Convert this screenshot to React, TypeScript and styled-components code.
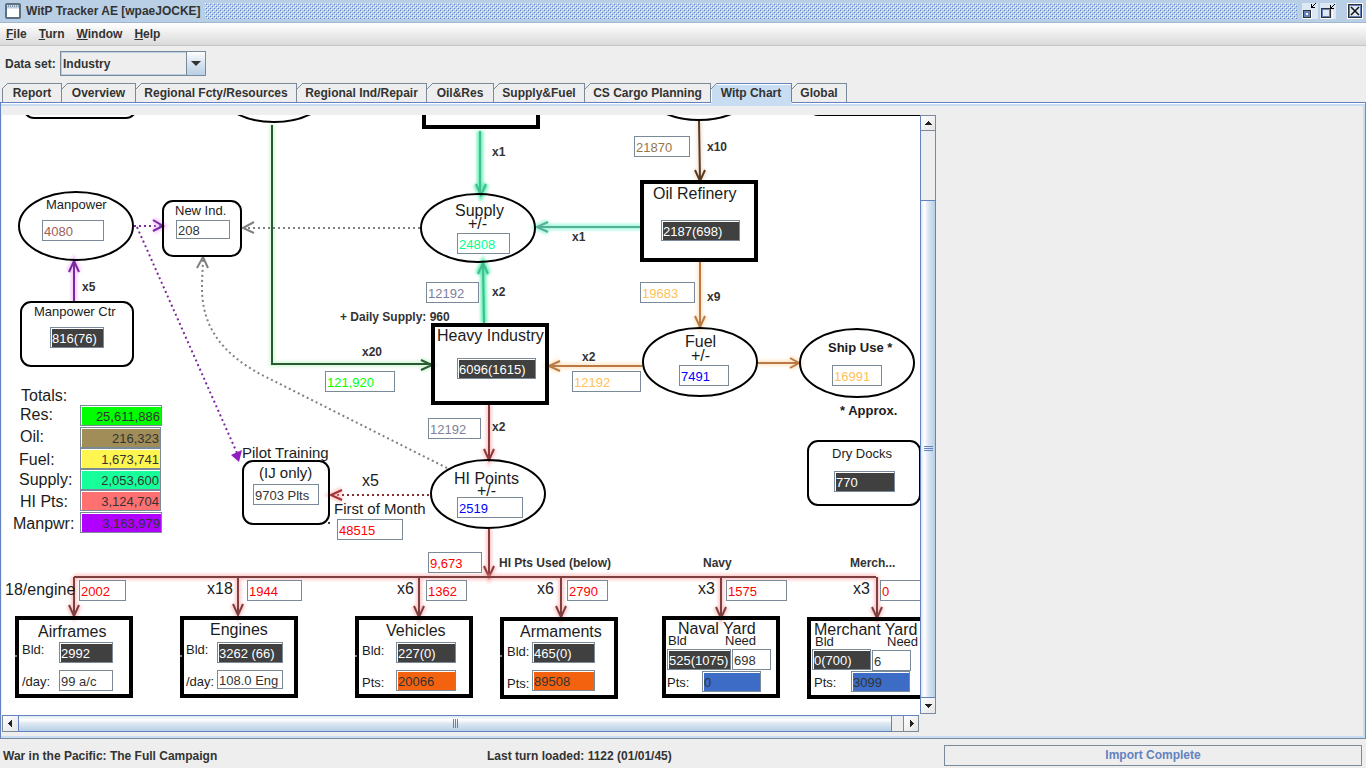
import React from "react";
import styled, { createGlobalStyle, css } from "styled-components";

const GlobalStyle = createGlobalStyle`
  *, *::before, *::after { box-sizing: border-box; }
  body {
    margin: 0;
    background: #eeeeee;
    color: #333333;
    font: bold 12px/14px "Liberation Sans", Arial, sans-serif;
  }
  button, input, select { font: inherit; color: inherit; margin: 0; }
`;

const Window = styled.div`
  display: flex;
  flex-direction: column;
  min-height: 100vh;
`;

/* ---------- title bar ---------- */

const TitleBar = styled.header`
  display: flex;
  align-items: center;
  height: 23px;
  padding: 0 3px 0 5px;
  background: #b8cfe5;
  border-bottom: 1px solid #9fb6cd;
`;

const WindowTitle = styled.h1`
  flex: 0 0 179px;
  margin: 0 0 0 5px;
  font-size: 12px;
  line-height: 14px;
  white-space: nowrap;
`;

const Bumps = styled.svg`
  flex: 1;
  min-width: 0;
  height: 16px;
  margin-right: 5px;
`;

const TitleButton = styled.button<{ $apart?: boolean }>`
  width: 16px;
  height: 16px;
  padding: 0;
  border: 0;
  background: none;
  margin-left: ${(p) => (p.$apart ? 9 : 0)}px;
  margin-right: ${(p) => (p.$apart ? 0 : 2)}px;
  svg { display: block; }
`;

/* ---------- menu and data set ---------- */

const MenuBar = styled.nav`
  display: flex;
  gap: 12px;
  align-items: center;
  height: 23px;
  padding: 0 6px;
  background: linear-gradient(#ffffff, #dadada);
  border-bottom: 1px solid #c4c4c4;
`;

const MenuButton = styled.button`
  padding: 0;
  border: 0;
  background: none;
  font-weight: bold;
  &::first-letter { text-decoration: underline; }
`;

const DataSetRow = styled.div`
  display: flex;
  align-items: center;
  padding: 5px;
`;

const DataSetLabel = styled.label`
  width: 55px;
`;

const Combo = styled.div`
  display: grid;
  grid-template-columns: 125px 19px;
  border: 1px solid #7a8a99;
  height: 25px;
  width: 146px;
`;

const ComboSelect = styled.select`
  grid-area: 1 / 1 / 2 / 3;
  appearance: none;
  width: 100%;
  height: 100%;
  padding: 0 20px 0 1px;
  border: 1px solid #b8cfe5;
  border-radius: 0;
  background: #eeeeee;
  font-weight: bold;
`;

const ComboArrow = styled.span`
  grid-area: 1 / 2 / 2 / 3;
  display: grid;
  place-items: center;
  pointer-events: none;
  border-left: 1px solid #7a8a99;
  background: linear-gradient(#ffffff, #dde8f3 40%, #b8cfe5);
  z-index: 1;
`;

/* ---------- tabs ---------- */

const TabList = styled.div`
  display: flex;
  padding: 2px 2px 0;
`;

const Tab = styled.button<{ $selected: boolean; $width: number }>`
  position: relative;
  flex: 0 0 ${(p) => p.$width}px;
  height: 19px;
  padding: 0 0 1px;
  border: 0 solid #7a8a99;
  border-width: 1px 1px 0 0;
  background: #eeeeee;
  font-weight: bold;
  text-align: center;
  white-space: nowrap;
  &:first-child { border-left-width: 1px; }
  &::before {
    content: "";
    position: absolute;
    left: 0;
    top: -1px;
    width: 6px;
    height: 6px;
    background: linear-gradient(135deg, #eeeeee 44%, #7a8a99 44% 56%, transparent 56%);
  }
  &:first-child::before { left: -1px; }
  ${(p) =>
    p.$selected &&
    css`
      border-color: #6382bf;
      background: #c8ddf2;
      box-shadow: inset 1px 1px 0 #ffffff, 0 3px 0 #c8ddf2;
      z-index: 1;
    `}
`;

const TabPanel = styled.main`
  flex: 1;
  display: grid;
  grid-template-columns: minmax(0, 918px) 17px;
  grid-template-rows: minmax(600px, 1fr) 17px;
  padding: 12px 0 6px 1px;
  border: 1px solid #6382bf;
  border-right-color: #7a8a99;
  border-bottom-color: #7a8a99;
  box-shadow: inset 0 1px 0 #ffffff, inset 0 3px 0 #c8ddf2,
    inset -2px -2px 0 #c8ddf2;
`;

/* ---------- chart viewport and scroll bars ---------- */

const Viewport = styled.div`
  overflow: hidden;
  background: #ffffff;
`;

/* The chart is shown scrolled; the margins are the scroll position. */
const Chart = styled.div`
  position: relative;
  width: 940px;
  height: 715px;
  margin: -115px 0 0 -2px;
`;

const ChartDrawing = styled.svg`
  display: block;
`;

const ScrollBar = styled.div<{ $vertical?: boolean }>`
  display: flex;
  flex-direction: ${(p) => (p.$vertical ? "column" : "row")};
  background: #eeeeee;
  border: 1px solid #7a8a99;
  ${(p) =>
    p.$vertical
      ? "width: 16px; margin-bottom: 1px; border-left-color: #6382bf;"
      : "height: 17px; margin-right: 1px; border-top-color: #6382bf;"}
`;

const ScrollButton = styled.button<{ $vertical?: boolean; $end?: boolean }>`
  display: grid;
  place-items: center;
  flex: none;
  padding: 0;
  width: ${(p) => (p.$vertical ? "auto" : "15px")};
  height: ${(p) => (p.$vertical ? "15px" : "auto")};
  border: 0 solid #7a8a99;
  ${(p) =>
    p.$vertical
      ? p.$end
        ? ""
        : "border-bottom-width: 1px;"
      : p.$end
        ? "border-left-width: 1px;"
        : ""}
  background: linear-gradient(135deg, #ffffff, #e4e4e4);
`;

const Track = styled.div<{ $size: number }>`
  flex: ${(p) => p.$size} 1 0;
`;

const Thumb = styled.div<{ $size: number; $vertical?: boolean }>`
  display: grid;
  place-items: center;
  flex: ${(p) => p.$size} 1 0;
  border: 1px solid #6382bf;
  margin: ${(p) => (p.$vertical ? "0 -1px" : "-1px 0")};
  background: linear-gradient(
    ${(p) => (p.$vertical ? "90deg" : "180deg")},
    #dde8f3, #ffffff 25%, #dde8f3 50%, #b8cfe5
  );
`;

/* ---------- status bar ---------- */

const StatusBar = styled.footer`
  display: grid;
  grid-template-columns: 484fr 457fr 418fr;
  align-items: center;
  height: 29px;
  padding: 4px 4px 0 3px;
`;

const Progress = styled.div`
  height: 21px;
  border: 1px solid #7a8a99;
  line-height: 19px;
  text-align: center;
  color: #6382bf;
`;

/* ---------- chart pieces ---------- */

type FontSize = 12 | 13 | 15 | 16;

const ascent: Record<FontSize, number> = { 12: 11, 13: 12, 15: 14, 16: 14 };

const ChartLabel = styled.span<{ $x: number; $y: number; $size: FontSize; $bold?: boolean }>`
  position: absolute;
  left: ${(p) => p.$x}px;
  top: ${(p) => p.$y - ascent[p.$size]}px;
  font-size: ${(p) => p.$size}px;
  line-height: ${(p) => p.$size + 2}px;
  font-weight: ${(p) => (p.$bold ? "bold" : "normal")};
  color: ${(p) => (p.$bold && p.$size === 12 ? "#333333" : "#1c1c1c")};
  white-space: pre;
`;

const ChartField = styled.input<{
  $x: number;
  $y: number;
  $w: number;
  $h: number;
  $ink: string;
  $fill: string;
  $right: boolean;
}>`
  position: absolute;
  left: ${(p) => p.$x}px;
  top: ${(p) => p.$y}px;
  width: ${(p) => p.$w}px;
  height: ${(p) => p.$h}px;
  padding: 2px 1px 0 1px;
  border: 1px solid #7a8a99;
  border-radius: 0;
  background: ${(p) => p.$fill};
  box-shadow: inset 1px 1px 0 #ffffff;
  color: ${(p) => p.$ink};
  font-weight: normal;
  font-size: 13px;
  text-align: ${(p) => (p.$right ? "right" : "left")};
`;

type Label = [text: string, x: number, baseline: number];

const factorLabels: Label[] = [
  ["x5", 82, 291],
  ["x1", 492, 156],
  ["x1", 572, 241],
  ["x2", 492, 296],
  ["x10", 707, 151],
  ["x9", 707, 301],
  ["x2", 582, 361],
  ["x20", 362, 356],
  ["x2", 492, 431],
  ["+ Daily Supply: 960", 340, 321],
  ["HI Pts Used (below)", 499, 567],
  ["Navy", 703, 567],
  ["Merch...", 850, 567],
];

const noteLabels: Label[] = [
  ["Ship Use *", 828, 352],
  ["* Approx.", 840, 415],
];

const largeLabels: Label[] = [
  ["Supply", 455, 216],
  ["+/-", 468, 229],
  ["Oil Refinery", 653, 199],
  ["Heavy Industry", 437, 341],
  ["Fuel", 685, 347],
  ["+/-", 691, 361],
  ["HI Points", 454, 484],
  ["+/-", 477, 496],
  ["Totals:", 21, 401],
  ["Res:", 20, 420],
  ["Oil:", 20, 442],
  ["Fuel:", 19, 465],
  ["Supply:", 19, 485],
  ["HI Pts:", 20, 507],
  ["Manpwr:", 13, 529],
  ["x5", 362, 486],
  ["18/engine", 5, 595],
  ["x18", 207, 594],
  ["x6", 397, 594],
  ["x6", 537, 594],
  ["x3", 698, 594],
  ["x3", 853, 594],
  ["Airframes", 38, 637],
  ["Engines", 210, 635],
  ["Vehicles", 386, 636],
  ["Armaments", 520, 637],
  ["Naval Yard", 678, 634],
  ["Merchant Yard", 814, 635],
];

const mediumLabels: Label[] = [
  ["Pilot Training", 242, 458],
  ["(IJ only)", 259, 478],
  ["First of Month", 334, 514],
];

const smallLabels: Label[] = [
  ["Manpower", 46, 209],
  ["New Ind.", 175, 215],
  ["Manpower Ctr", 34, 316],
  ["Dry Docks", 832, 458],
  ["Bld:", 22, 654],
  ["/day:", 22, 686],
  ["Bld:", 186, 654],
  ["/day:", 186, 686],
  ["Bld:", 362, 655],
  ["Pts:", 362, 687],
  ["Bld:", 507, 656],
  ["Pts:", 507, 688],
  ["Bld", 668, 645],
  ["Need", 725, 645],
  ["Pts:", 667, 687],
  ["Bld", 815, 646],
  ["Need", 887, 646],
  ["Pts:", 814, 687],
];

type Field = {
  name: string;
  value: string;
  x: number;
  y: number;
  w: number;
  h?: number;
  ink?: string;
  fill?: string;
  right?: boolean;
};

const dark = { ink: "#ffffff", fill: "#404040" };
const red = { ink: "#ff0000" };
const amber = { ink: "#ffc257" };
const slate = { ink: "#80809a" };

const fields: Field[] = [
  { name: "Manpower", value: "4080", x: 42, y: 220, w: 62, ink: "#a06058" },
  { name: "New industry", value: "208", x: 176, y: 220, w: 54, h: 19 },
  { name: "Manpower centers", value: "816(76)", x: 50, y: 327, w: 54, ...dark },
  { name: "Supply balance", value: "24808", x: 457, y: 233, w: 53, ink: "#00ff90" },
  { name: "Supply from heavy industry", value: "12192", x: 426, y: 282, w: 53, ...slate },
  { name: "Heavy industry", value: "6096(1615)", x: 457, y: 358, w: 79, ...dark },
  { name: "Oil to refinery", value: "21870", x: 634, y: 136, w: 56, ink: "#94794c" },
  { name: "Oil refinery", value: "2187(698)", x: 661, y: 220, w: 79, ...dark },
  { name: "Fuel from refinery", value: "19683", x: 640, y: 282, w: 55, ...amber },
  { name: "Fuel balance", value: "7491", x: 679, y: 365, w: 50, ink: "#0000ff" },
  { name: "Ship use", value: "16991", x: 832, y: 365, w: 50, ...amber },
  { name: "Resources used", value: "121,920", x: 325, y: 371, w: 70, ink: "#00ff00" },
  { name: "Fuel used by industry", value: "12192", x: 572, y: 371, w: 69, ...amber },
  { name: "HI points made", value: "12192", x: 428, y: 418, w: 53, ...slate },
  { name: "HI points balance", value: "2519", x: 457, y: 497, w: 66, ink: "#0000ff" },
  { name: "Pilots", value: "9703 Plts", x: 253, y: 484, w: 66 },
  { name: "Pilot training cost", value: "48515", x: 337, y: 519, w: 66, ...red },
  { name: "HI points used", value: "9,673", x: 428, y: 552, w: 54, ...red },
  { name: "Dry docks", value: "770", x: 834, y: 471, w: 61, ...dark },
  { name: "Total resources", value: "25,611,886", x: 80, y: 405, w: 82, fill: "#00ff00", right: true },
  { name: "Total oil", value: "216,323", x: 80, y: 427, w: 81, fill: "#a08d58", right: true },
  { name: "Total fuel", value: "1,673,741", x: 80, y: 448, w: 81, fill: "#fff550", right: true },
  { name: "Total supply", value: "2,053,600", x: 80, y: 469, w: 81, fill: "#17ff99", right: true },
  { name: "Total HI points", value: "3,124,704", x: 80, y: 490, w: 81, fill: "#ff7070", right: true },
  { name: "Total manpower", value: "3,163,979", x: 80, y: 512, w: 82, fill: "#b000ff", right: true },
  { name: "Airframe points", value: "2002", x: 79, y: 580, w: 47, ...red },
  { name: "Engine points", value: "1944", x: 247, y: 580, w: 55, ...red },
  { name: "Vehicle points used", value: "1362", x: 426, y: 580, w: 41, ...red },
  { name: "Armament points used", value: "2790", x: 567, y: 580, w: 41, ...red },
  { name: "Naval points used", value: "1575", x: 726, y: 580, w: 61, ...red },
  { name: "Merchant points used", value: "0", x: 880, y: 580, w: 58, ...red },
  { name: "Airframes built", value: "2992", x: 59, y: 642, w: 54, ...dark },
  { name: "Airframes per day", value: "99 a/c", x: 59, y: 670, w: 54 },
  { name: "Engines built", value: "3262 (66)", x: 217, y: 642, w: 66, ...dark },
  { name: "Engines per day", value: "108.0 Eng", x: 217, y: 670, w: 66, h: 19 },
  { name: "Vehicles built", value: "227(0)", x: 396, y: 642, w: 60, ...dark },
  { name: "Vehicle points", value: "20066", x: 396, y: 670, w: 60, fill: "#f3620f" },
  { name: "Armaments built", value: "465(0)", x: 532, y: 642, w: 63, ...dark },
  { name: "Armament points", value: "89508", x: 532, y: 670, w: 63, fill: "#f3620f" },
  { name: "Naval yard built", value: "525(1075)", x: 667, y: 649, w: 64, ...dark },
  { name: "Naval yard need", value: "698", x: 732, y: 649, w: 39 },
  { name: "Naval yard points", value: "0", x: 702, y: 671, w: 59, fill: "#3c6cc6" },
  { name: "Merchant yard built", value: "0(700)", x: 812, y: 649, w: 59, ...dark },
  { name: "Merchant yard need", value: "6", x: 872, y: 650, w: 39 },
  { name: "Merchant yard points", value: "3099", x: 851, y: 671, w: 59, fill: "#3c6cc6" },
];

type EdgeProps = { d: string; color: string; glow: string; strong?: boolean };

function Edge({ d, color, glow, strong }: EdgeProps) {
  return (
    <g fill="none">
      <path d={d} stroke={glow} strokeWidth="6" opacity={strong ? 0.8 : 0.5} filter="url(#soft)" />
      <path d={d} stroke={color} strokeWidth="2" />
    </g>
  );
}

function Dotted({ d, color }: { d: string; color: string }) {
  return <path d={d} fill="none" stroke={color} strokeWidth={2} strokeDasharray="2 3" />;
}

const down = (x: number, y: number) => `M${x - 5} ${y - 11}L${x} ${y}L${x + 5} ${y - 11}`;
const up = (x: number, y: number) => `M${x - 5} ${y + 11}L${x} ${y}L${x + 5} ${y + 11}`;
const left = (x: number, y: number) => `M${x + 11} ${y - 5}L${x} ${y}L${x + 11} ${y + 5}`;
const right = (x: number, y: number) => `M${x - 11} ${y - 5}L${x} ${y}L${x - 11} ${y + 5}`;

const hiColor = { color: "#8b3a3c", glow: "#ff9a9a" };
const supplyColor = { color: "#45b98f", glow: "#3df0a4", strong: true };
const fuelColor = { color: "#b97a45", glow: "#ffd39a" };

const drops: [number, number][] = [
  [74, 615],
  [238, 614],
  [419, 616],
  [561, 616],
  [721, 617],
  [877, 617],
];

const ovals: [number, number][] = [
  [274, 88],
  [699, 86],
  [76, 226],
  [478, 228],
  [700, 362],
  [488, 494],
  [857, 363],
];

const boxes: [number, number][] = [
  [424, 49],
  [642, 182],
  [433, 325],
  [17, 618],
  [182, 618],
  [357, 618],
  [502, 619],
  [664, 618],
  [809, 619],
];

const roundBoxes: [number, number, number, number][] = [
  [24, 54, 112, 64],
  [808, 51, 122, 64],
  [163, 201, 78, 55],
  [21, 302, 112, 64],
  [808, 441, 112, 64],
  [243, 461, 86, 63],
];

function Drawing() {
  return (
    <ChartDrawing width="940" height="715" viewBox="0 0 940 715" aria-hidden="true">
      <defs>
        <filter id="soft" filterUnits="userSpaceOnUse" x="0" y="0" width="940" height="715">
          <feGaussianBlur stdDeviation="1.4" />
        </filter>
      </defs>

      <Edge d={`M272 125V364H432${right(432, 365)}`} color="#2a5a33" glow="#b4f0b8" />
      <Edge d={`M74 301V262${up(74, 261)}`} color="#7b2a9c" glow="#e79bff" />
      <Edge d={`M480 131V194${down(481, 195)}`} {...supplyColor} />
      <Edge d={`M484 323L483 264${up(483, 263)}`} {...supplyColor} />
      <Edge d={`M642 227H538${left(537, 227)}`} color="#55b095" glow="#8ff5d4" strong />
      <Edge d={`M699 120L700 180${down(700, 181)}`} color="#5b3a20" glow="#e6d2c0" />
      <Edge d={`M700 262V326${down(700, 327)}`} {...fuelColor} />
      <Edge d={`M642 366H550${left(549, 366)}`} {...fuelColor} />
      <Edge d="M758 363H799M790 358L799 363L790 368" {...fuelColor} />
      <Edge d={`M489 405V460${down(489, 460)}`} {...hiColor} />
      <Edge d={`M489 529V577${down(489, 577)}`} {...hiColor} />
      <Edge
        d={`M74 577H876${drops.map(([x, y]) => `M${x} 577V${y}${down(x, y + 1)}`).join("")}`}
        color="#7d3f40"
        glow="#ff9a9a"
      />

      <Dotted d="M134 226H162" color="#7b2a9c" />
      <Edge d="M153 220L163 226L153 231" color="#7b2a9c" glow="#e79bff" />
      <Dotted d="M137 227L237 453" color="#7b2a9c" />
      <path d="M231 455L242 450L239 462Z" fill="#8f1fc0" />
      <Dotted d="M420 228H244" color="#808080" />
      <path d="M254 222L243 228L254 233" fill="none" stroke="#808080" strokeWidth="2" />
      <Dotted d="M447 468L262 375C215 350 201 320 202 283L203 260" color="#808080" />
      <path d="M197 268L203 257L208 268" fill="none" stroke="#808080" strokeWidth="2" />
      <Dotted d="M429 495H333" color="#8b2c31" />
      <Edge d={left(331, 495)} color="#a03236" glow="#ff9a9a" />

      <g fill="none" stroke="#000000" strokeWidth="2">
        {ovals.map(([cx, cy]) => (
          <ellipse key={`${cx}-${cy}`} cx={cx} cy={cy} rx="57" ry="34" />
        ))}
        {roundBoxes.map(([x, y, w, h]) => (
          <rect key={`${x}-${y}`} x={x} y={y} width={w} height={h} rx="10" />
        ))}
      </g>
      <g fill="none" stroke="#000000" strokeWidth="4">
        {boxes.map(([x, y]) => (
          <rect key={`${x}-${y}`} x={x} y={y} width="114" height="78" />
        ))}
      </g>
      <circle cx="329" cy="523" r="1" />
      <g fill="#a8b0a8">
        <circle cx="16" cy="656" r="1" />
        <circle cx="181" cy="656" r="1" />
        <circle cx="356" cy="656" r="1" />
        <circle cx="501" cy="656" r="1" />
      </g>
    </ChartDrawing>
  );
}

function Labels({ items, size, bold }: { items: Label[]; size: FontSize; bold?: boolean }) {
  return (
    <>
      {items.map(([text, x, y]) => (
        <ChartLabel key={`${x}-${y}`} $x={x} $y={y} $size={size} $bold={bold}>
          {text}
        </ChartLabel>
      ))}
    </>
  );
}

function ScrollArrow({ d }: { d: string }) {
  return (
    <svg width="9" height="9" viewBox="0 0 9 9" shapeRendering="crispEdges" aria-hidden="true">
      <path d={d} fill="#222222" />
    </svg>
  );
}

const tabs: [name: string, width: number][] = [
  ["Report", 60],
  ["Overview", 74],
  ["Regional Fcty/Resources", 161],
  ["Regional Ind/Repair", 130],
  ["Oil&Res", 67],
  ["Supply&Fuel", 91],
  ["CS Cargo Planning", 126],
  ["Witp Chart", 81],
  ["Global", 55],
];

export default function App() {
  return (
    <Window>
      <GlobalStyle />
      <TitleBar>
        <svg width="16" height="16" viewBox="0 0 16 16" aria-hidden="true">
          <rect x="1" y="1" width="14" height="14" rx="1" fill="#ffffff" stroke="#5f6f82" strokeWidth="2" />
          <path d="M2 4H14" stroke="#b8cfe5" strokeWidth="3" />
          <path d="M3 3H14" stroke="#4a5a70" strokeDasharray="1 1" />
        </svg>
        <WindowTitle>WitP Tracker AE [wpaeJOCKE]</WindowTitle>
        <Bumps aria-hidden="true" shapeRendering="crispEdges">
          <defs>
            <pattern id="bumps" width="4" height="4" patternUnits="userSpaceOnUse">
              <path d="M0 0h1v1h-1zM2 2h1v1h-1z" fill="#ffffff" />
              <path d="M1 1h1v1h-1zM3 3h1v1h-1z" fill="#5f7fd0" />
            </pattern>
          </defs>
          <rect width="100%" height="16" fill="url(#bumps)" />
        </Bumps>
        <TitleButton aria-label="Minimize">
          <svg width="16" height="16" viewBox="0 0 16 16" shapeRendering="crispEdges">
            <rect width="16" height="16" fill="#dce8f4" />
            <rect x="1" y="7" width="8" height="8" fill="#333333" />
            <rect x="2" y="8" width="6" height="6" fill="#6382bf" />
            <rect x="4" y="10" width="2" height="2" fill="#ffffff" />
            <path d="M9 15V7M1 15H10" stroke="#ffffff" />
            <path d="M9 1h1v2h1v1h2v1h-4zM11 2h1v1h-1zM12 1h1v1h-1zM13 0h1v1h-1z" fill="#000000" />
          </svg>
        </TitleButton>
        <TitleButton aria-label="Restore">
          <svg width="16" height="16" viewBox="0 0 16 16" shapeRendering="crispEdges">
            <rect width="16" height="16" fill="#dce8f4" />
            <rect x="1" y="5" width="10" height="10" fill="#333333" />
            <rect x="2" y="6" width="8" height="8" fill="#6382bf" />
            <rect x="3" y="7" width="6" height="6" fill="#dce8f4" />
            <path d="M12 15V7M1 15H12" stroke="#ffffff" />
            <path d="M10 2h1v2h1v1h2v1h-4zM12 3h1v1h-1zM13 2h1v1h-1zM14 1h1v1h-1z" fill="#000000" />
          </svg>
        </TitleButton>
        <TitleButton $apart aria-label="Close">
          <svg width="16" height="16" viewBox="0 0 16 16" shapeRendering="crispEdges">
            <rect width="16" height="16" fill="#ffffff" />
            <rect x="1" y="1" width="14" height="14" fill="#333333" />
            <rect x="2" y="2" width="12" height="12" fill="#6382bf" />
            <rect x="3" y="3" width="10" height="10" fill="#dce8f4" />
            <path d="M4 4L12 12M12 4L4 12" stroke="#111111" strokeWidth="1.5" shapeRendering="auto" />
          </svg>
        </TitleButton>
      </TitleBar>

      <MenuBar>
        {["File", "Turn", "Window", "Help"].map((name) => (
          <MenuButton key={name}>{name}</MenuButton>
        ))}
      </MenuBar>

      <DataSetRow>
        <DataSetLabel htmlFor="dataset">Data set:</DataSetLabel>
        <Combo>
          <ComboSelect id="dataset" defaultValue="Industry">
            <option>Industry</option>
          </ComboSelect>
          <ComboArrow>
            <svg width="10" height="5" viewBox="0 0 10 5" aria-hidden="true">
              <path d="M0 0H10L5 5Z" fill="#333333" />
            </svg>
          </ComboArrow>
        </Combo>
      </DataSetRow>

      <TabList role="tablist">
        {tabs.map(([name, width]) => (
          <Tab
            key={name}
            role="tab"
            $width={width}
            $selected={name === "Witp Chart"}
            aria-selected={name === "Witp Chart"}
          >
            {name}
          </Tab>
        ))}
      </TabList>

      <TabPanel role="tabpanel" aria-label="Witp Chart">
        <Viewport>
          <Chart>
            <Drawing />
            <Labels items={factorLabels} size={12} bold />
            <Labels items={noteLabels} size={13} bold />
            <Labels items={largeLabels} size={16} />
            <Labels items={mediumLabels} size={15} />
            <Labels items={smallLabels} size={13} />
            {fields.map((f) => (
              <ChartField
                key={f.name}
                aria-label={f.name}
                readOnly
                defaultValue={f.value}
                $x={f.x}
                $y={f.y}
                $w={f.w}
                $h={f.h ?? 21}
                $ink={f.ink ?? "#333333"}
                $fill={f.fill ?? "#ffffff"}
                $right={f.right ?? false}
              />
            ))}
          </Chart>
        </Viewport>
        <ScrollBar $vertical>
          <ScrollButton $vertical aria-label="Scroll up">
            <ScrollArrow d="M4 2H5V3H6V4H7V5H8V6H1V5H2V4H3V3H4Z" />
          </ScrollButton>
          <Track $size={69} />
          <Thumb $vertical $size={499}>
            <svg width="9" height="5" shapeRendering="crispEdges" aria-hidden="true">
              <path d="M0 0H9V1H0ZM0 2H9V3H0ZM0 4H9V5H0Z" fill="#6382bf" />
            </svg>
          </Thumb>
          <ScrollButton $vertical $end aria-label="Scroll down">
            <ScrollArrow d="M1 3H8V4H7V5H6V6H5V7H4V6H3V5H2V4H1Z" />
          </ScrollButton>
        </ScrollBar>
        <ScrollBar>
          <ScrollButton aria-label="Scroll left">
            <ScrollArrow d="M2 4H3V3H4V2H5V1H6V8H5V7H4V6H3V5H2Z" />
          </ScrollButton>
          <Thumb $size={874}>
            <svg width="5" height="9" shapeRendering="crispEdges" aria-hidden="true">
              <path d="M0 0V9H1V0ZM2 0V9H3V0ZM4 0V9H5V0Z" fill="#6382bf" />
            </svg>
          </Thumb>
          <Track $size={11} />
          <ScrollButton $end aria-label="Scroll right">
            <ScrollArrow d="M3 1H4V2H5V3H6V4H7V5H6V6H5V7H4V8H3Z" />
          </ScrollButton>
        </ScrollBar>
      </TabPanel>

      <StatusBar>
        <span>War in the Pacific: The Full Campaign</span>
        <span>Last turn loaded: 1122 (01/01/45)</span>
        <Progress role="status">Import Complete</Progress>
      </StatusBar>
    </Window>
  );
}
